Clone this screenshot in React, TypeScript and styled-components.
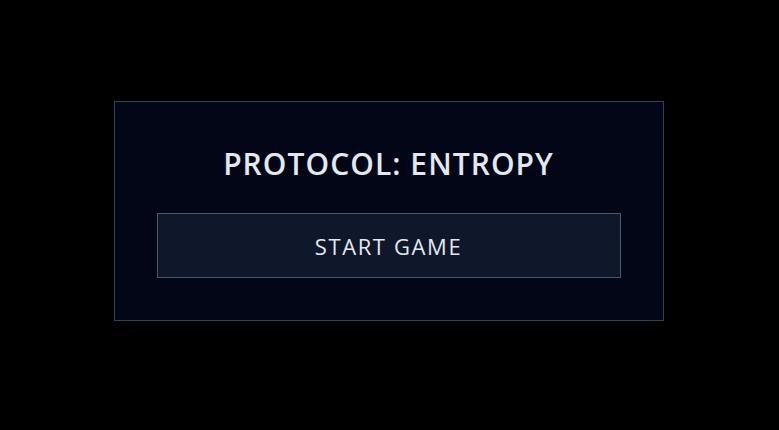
import * as React from "react";
import styled, { createGlobalStyle } from "styled-components";

const GlobalStyle = createGlobalStyle`
  html, body {
    margin: 0;
    padding: 0;
    background: #000;
  }
  body {
    font-family: "Open Sans", "Noto Sans", sans-serif;
  }
`;

const Screen = styled.div`
  width: 100vw;
  height: 100vh;
  display: flex;
  align-items: center;
  justify-content: center;
  padding: 0 2px 8px 0;
  box-sizing: border-box;
`;

const Panel = styled.div`
  width: 550px;
  box-sizing: border-box;
  padding: 42px 42px;
  background: #020617;
  border: 1px solid #334155;
  display: flex;
  flex-direction: column;
  align-items: center;
  gap: 29px;
`;

const Title = styled.h1`
  margin: 0;
  font-size: 30px;
  line-height: 40px;
  font-weight: 600;
  color: #e2e8f0;
  letter-spacing: 1.05px;
`;

const StartButton = styled.button`
  width: 100%;
  height: 65px;
  background: #0f172a;
  border: 1px solid #4b5869;
  color: #e2e8f0;
  font-family: inherit;
  font-size: 22px;
  letter-spacing: 1.6px;
  cursor: pointer;
`;

export default function App(): JSX.Element {
  return (
    <>
      <GlobalStyle />
      <Screen>
        <Panel>
          <Title>PROTOCOL: ENTROPY</Title>
          <StartButton>START GAME</StartButton>
        </Panel>
      </Screen>
    </>
  );
}
